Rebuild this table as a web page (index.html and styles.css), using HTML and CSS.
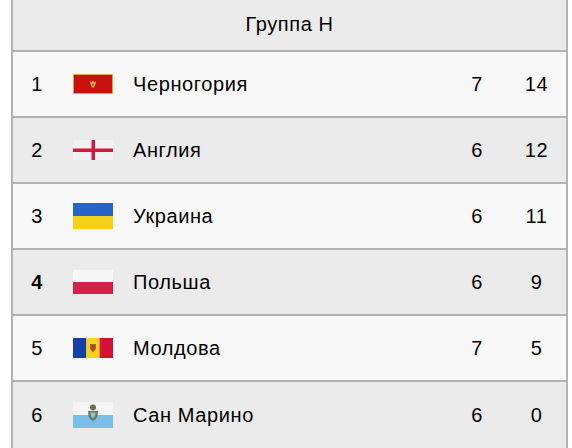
FILE: index.html
```html
<!DOCTYPE html>
<html lang="ru">
<head>
<meta charset="utf-8">
<title>Группа H</title>
<link rel="stylesheet" href="styles.css">
</head>
<body>
<div class="table">
  <div class="head">Группа Н</div>

  <div class="row odd">
    <div class="pos">1</div>
    <div class="flag">
      <svg width="40" height="20" viewBox="0 0 40 20">
        <rect width="40" height="20" fill="#d6ad3f"/>
        <rect x="1" y="1" width="38" height="18" fill="#c8110f"/>
        <path d="M17 7 L18.5 8.5 L20 6.5 L21.5 8.5 L23 7 L22.5 10 L21.5 12.5 L20 14 L18.5 12.5 L17.5 10 Z" fill="#e1b84a"/>
        <circle cx="20" cy="10.5" r="1.3" fill="#b5791c"/>
      </svg>
    </div>
    <div class="name">Черногория</div>
    <div class="num">7</div>
    <div class="num">14</div>
  </div>

  <div class="row even">
    <div class="pos">2</div>
    <div class="flag">
      <svg width="40" height="20" viewBox="0 0 40 20">
        <rect width="40" height="20" fill="#f1f1f1"/>
        <rect x="0" y="8.5" width="40" height="3.5" fill="#cf1b3c"/>
        <rect x="18.5" y="0" width="3.5" height="20" fill="#cf1b3c"/>
      </svg>
    </div>
    <div class="name">Англия</div>
    <div class="num">6</div>
    <div class="num">12</div>
  </div>

  <div class="row odd">
    <div class="pos">3</div>
    <div class="flag">
      <svg width="40" height="26" viewBox="0 0 40 26">
        <rect width="40" height="13" fill="#2565c9"/>
        <rect y="13" width="40" height="13" fill="#f5d21a"/>
      </svg>
    </div>
    <div class="name">Украина</div>
    <div class="num">6</div>
    <div class="num">11</div>
  </div>

  <div class="row even">
    <div class="pos bold">4</div>
    <div class="flag">
      <svg width="40" height="24" viewBox="0 0 40 24">
        <rect width="40" height="12" fill="#f7f7f7"/>
        <rect y="12" width="40" height="12" fill="#d2224a"/>
      </svg>
    </div>
    <div class="name">Польша</div>
    <div class="num">6</div>
    <div class="num">9</div>
  </div>

  <div class="row odd">
    <div class="pos">5</div>
    <div class="flag">
      <svg width="40" height="20" viewBox="0 0 40 20">
        <rect width="13.4" height="20" fill="#1540a8"/>
        <rect x="13.3" width="13.4" height="20" fill="#f8d21c"/>
        <rect x="26.6" width="13.4" height="20" fill="#d41236"/>
        <path d="M17 6 L23 6 L23 11 L20 14.5 L17 11 Z" fill="#9a6a2e"/>
        <rect x="18.6" y="7.5" width="2.8" height="4" fill="#c9302c"/>
      </svg>
    </div>
    <div class="name">Молдова</div>
    <div class="num">7</div>
    <div class="num">5</div>
  </div>

  <div class="row even">
    <div class="pos">6</div>
    <div class="flag">
      <svg width="40" height="26" viewBox="0 0 40 26">
        <rect width="40" height="13" fill="#f4f4f4"/>
        <rect y="13" width="40" height="13" fill="#79bfe8"/>
        <circle cx="20" cy="5.5" r="3" fill="#6f6c4c"/>
        <path d="M15 9 L25 9 L24.5 14 L22.5 17.5 L20 19 L17.5 17.5 L15.5 14 Z" fill="#5f7d62"/>
        <path d="M17.5 10.5 L22.5 10.5 L22 14 L20 16.5 L18 14 Z" fill="#9fbfcc"/>
      </svg>
    </div>
    <div class="name">Сан Марино</div>
    <div class="num">6</div>
    <div class="num">0</div>
  </div>
</div>
</body>
</html>
```

FILE: styles.css
```css
html, body {
  margin: 0;
  padding: 0;
  background: #ffffff;
}

body {
  font-family: "Liberation Sans", Arial, sans-serif;
  color: #000000;
  width: 572px;
  height: 448px;
  overflow: hidden;
}

.table {
  margin-left: 11px;
  width: 557px;
  box-sizing: border-box;
  border-left: 2px solid #b3b3b3;
  border-right: 2px solid #b3b3b3;
}

.head {
  height: 52px;
  background: #ebebeb;
  border-bottom: 2px solid #b3b3b3;
  display: flex;
  align-items: center;
  justify-content: center;
  font-size: 20px;
  letter-spacing: 0.6px;
  padding-bottom: 2px;
  box-sizing: border-box;
}

.row {
  display: grid;
  grid-template-columns: 48px 72px 1fr 60px 59px;
  align-items: center;
  height: 66px;
  box-sizing: border-box;
  border-bottom: 2px solid #b3b3b3;
  font-size: 20px;
  letter-spacing: 0.6px;
}

.row:last-child {
  border-bottom: none;
}

.odd {
  background: #f8f8f8;
}

.even {
  background: #ebebeb;
}

.pos {
  text-align: center;
}

.bold {
  font-weight: bold;
}

.flag {
  padding-left: 12px;
  display: flex;
  align-items: center;
}

.flag svg {
  display: block;
}

.num {
  text-align: center;
}
```
